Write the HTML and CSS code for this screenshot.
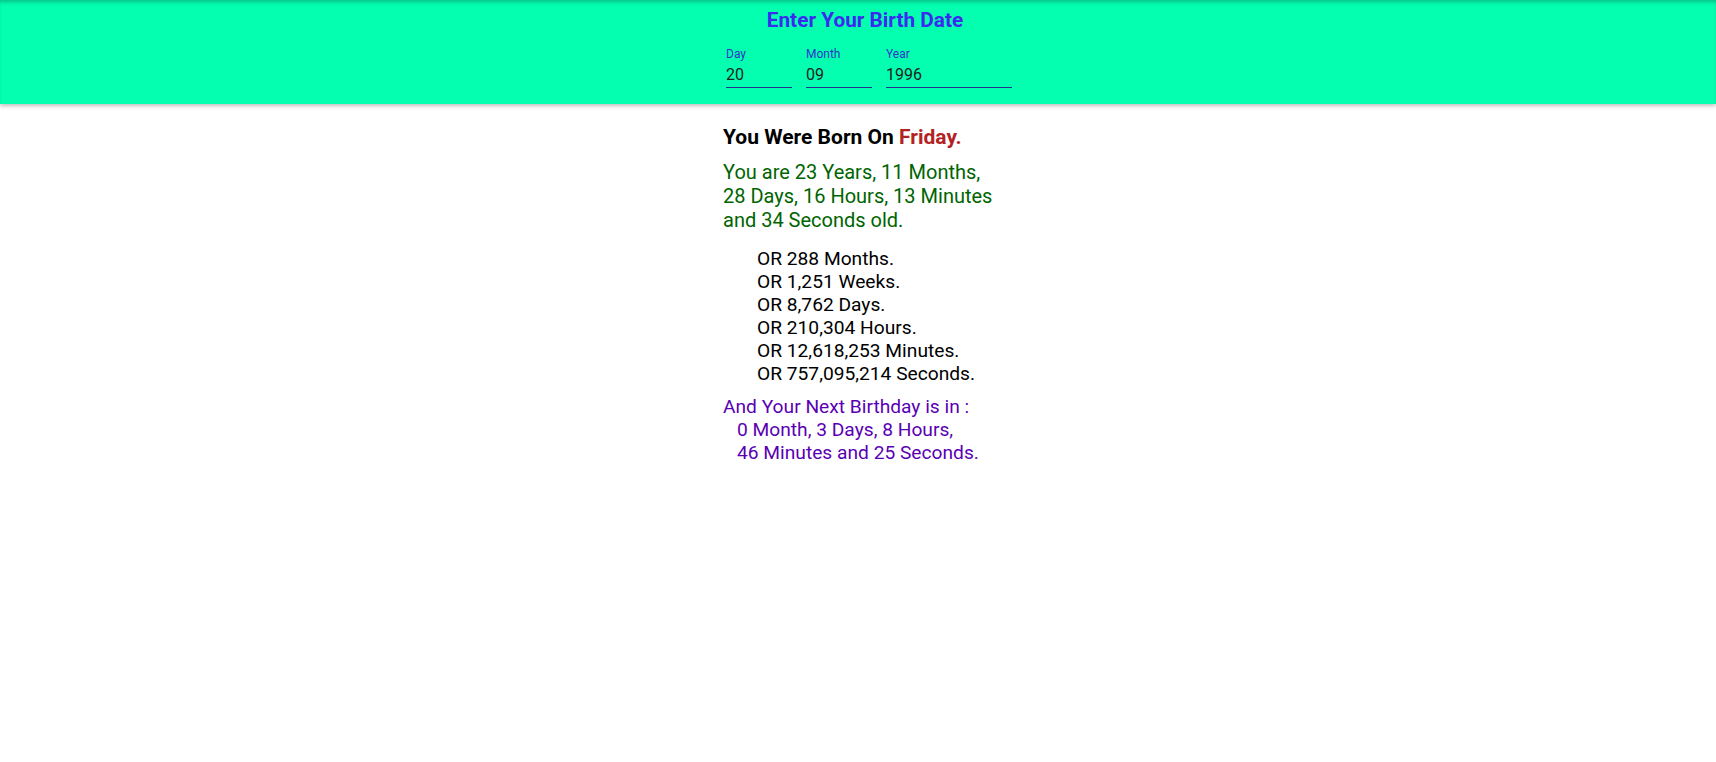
FILE: index.html
```html
<!DOCTYPE html>
<html lang="en">
<head>
<meta charset="utf-8">
<title>Age Calculator</title>
<link rel="stylesheet" href="styles.css">
</head>
<body>
<header class="app-bar">
  <div class="bar-inner">
    <h1 class="bar-title">Enter Your Birth Date</h1>
    <div class="fields">
      <label class="field field-day">
        <span class="field-label">Day</span>
        <span class="field-input">20</span>
      </label>
      <label class="field field-month">
        <span class="field-label">Month</span>
        <span class="field-input">09</span>
      </label>
      <label class="field field-year">
        <span class="field-label">Year</span>
        <span class="field-input">1996</span>
      </label>
    </div>
  </div>
</header>
<main class="result">
  <h2 class="born">You Were Born On <span class="day-name">Friday.</span></h2>
  <p class="age">You are 23 Years, 11 Months, 28 Days, 16 Hours, 13 Minutes and 34 Seconds old.</p>
  <ul class="totals">
    <li>OR 288 Months.</li>
    <li>OR 1,251 Weeks.</li>
    <li>OR 8,762 Days.</li>
    <li>OR 210,304 Hours.</li>
    <li>OR 12,618,253 Minutes.</li>
    <li>OR 757,095,214 Seconds.</li>
  </ul>
  <div class="next">
    <div>And Your Next Birthday is in :</div>
    <div class="next-detail">0 Month, 3 Days, 8 Hours,<br>46 Minutes and 25 Seconds.</div>
  </div>
</main>
</body>
</html>
```
FILE: styles.css
```css
html, body {
  margin: 0;
  padding: 0;
  background: #ffffff;
  font-family: Roboto, "Liberation Sans", sans-serif;
}

.app-bar {
  background: #05ffb0;
  height: 104px;
  box-sizing: border-box;
  padding-top: 8px;
  box-shadow: 0 2px 4px rgba(0, 0, 0, 0.25), inset 0 4px 4px -2px rgba(0, 0, 0, 0.25);
}

.bar-inner {
  width: 318px;
  box-sizing: border-box;
  margin: 0 auto;
  padding-left: 27px;
  padding-right: 5px;
  display: flex;
  flex-direction: column;
}

.bar-title {
  margin: 0;
  padding-right: 8px;
  font-size: 20.8px;
  line-height: 24px;
  font-weight: 700;
  color: #3b2af0;
  text-align: center;
}

.fields {
  display: flex;
  gap: 14px;
  margin-top: 15px;
}

.field {
  display: flex;
  flex-direction: column;
  flex: none;
}

.field-day, .field-month { width: 66px; }
.field-year { width: 126px; }

.field-label {
  font-size: 12px;
  line-height: 14px;
  color: #2b35c8;
}

.field-input {
  margin-top: 4px;
  font-size: 16px;
  line-height: 19px;
  color: #1d1d1d;
  padding-bottom: 3px;
  border-bottom: 1px solid #26308f;
}

.result {
  width: 270px;
  margin: 20.5px auto 0;
}

.born {
  margin: 0;
  font-size: 21px;
  font-weight: 700;
  color: #000;
}

.day-name {
  color: #b22222;
}

.age {
  margin: 11.6px 0 0;
  font-size: 20px;
  color: #006400;
}

.totals {
  list-style: none;
  margin: 14.7px 0 0;
  padding: 0 0 0 34px;
  font-size: 19.2px;
  color: #000;
  white-space: nowrap;
}

.next {
  margin-top: 10px;
  font-size: 19.2px;
  color: #5a00b4;
  white-space: nowrap;
}

.next-detail {
  padding-left: 14px;
}
```
